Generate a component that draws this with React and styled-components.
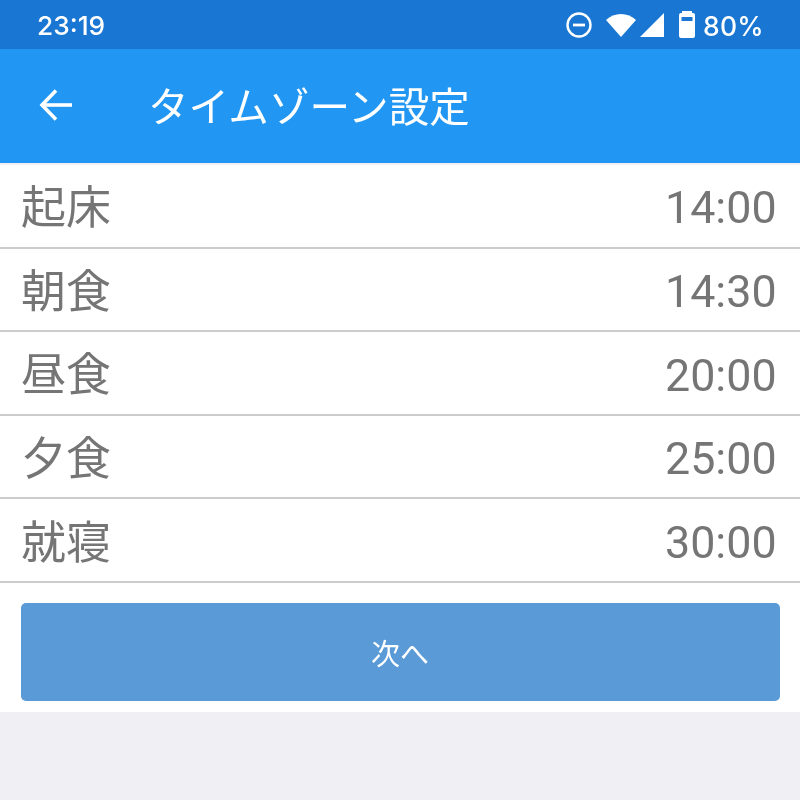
import React from 'react'
import styled, { createGlobalStyle } from 'styled-components'

const GlobalStyle = createGlobalStyle`
  html, body {
    margin: 0;
    padding: 0;
    background: #efeff4;
    font-family: Roboto, "Noto Sans CJK JP", sans-serif;
  }
`

const Page = styled.div`
  width: 800px;
  height: 800px;
  background: #efeff4;
  overflow: hidden;
`

const StatusBar = styled.div`
  height: 49px;
  background: #1976d2;
  display: flex;
  align-items: center;
  justify-content: space-between;
  padding: 0 36px 0 37px;
  box-sizing: border-box;
  color: #fff;
`

const Clock = styled.span`
  font-family: Inter, sans-serif;
  font-size: 26.3px;
  font-weight: 500;
  padding-top: 2px;
  will-change: transform;
`

const StatusIcons = styled.div`
  display: flex;
  align-items: center;
`

const StatusIcon = styled.svg`
  display: block;
  margin-left: ${props => props.$gap || 0}px;
`

const Percent = styled.span`
  font-family: Inter, sans-serif;
  font-size: 26.5px;
  font-weight: 500;
  letter-spacing: 0.2px;
  margin-left: 8px;
  padding-top: 2px;
  will-change: transform;
`

const Header = styled.div`
  height: 114px;
  background: #2196f3;
  display: flex;
  align-items: center;
  padding: 0 0 3px 38px;
  box-sizing: border-box;
`

const BackIcon = styled.svg`
  width: 36px;
  height: 36px;
  display: block;
`

const Title = styled.div`
  margin-left: 74px;
  color: #fff;
  font-size: 40.6px;
  font-family: "Noto Sans CJK JP", sans-serif;
  line-height: 1;
  padding-top: 2px;
  will-change: transform;
`

const List = styled.div`
  background: #fff;
  margin-top: 2px;
`

const Row = styled.div`
  height: 83.6px;
  box-sizing: border-box;
  border-bottom: 2px solid #cccccc;
  display: flex;
  align-items: center;
  justify-content: space-between;
  padding: 0 23.5px 0 21px;
  color: #757575;
`

const Label = styled.span`
  font-size: 45px;
  font-family: "Noto Sans CJK JP", sans-serif;
  line-height: 1;
  padding-bottom: 2px;
  will-change: transform;
`

const Time = styled.span`
  font-size: 44.8px;
  line-height: 1;
  padding-top: 6px;
  will-change: transform;
`

const Footer = styled.div`
  background: #fff;
  padding: 20px 20px 0 21px;
  height: 129px;
  box-sizing: border-box;
`

const NextButton = styled.button`
  display: block;
  width: 100%;
  height: 98px;
  padding: 0;
  border: none;
  border-radius: 5px;
  background: #5a9ad7;
  color: #fff;
  font-size: 29px;
  font-family: "Noto Sans CJK JP", sans-serif;
`

const ButtonText = styled.span`
  display: inline-block;
  will-change: transform;
`

const rows = [
  ['起床', '14:00'],
  ['朝食', '14:30'],
  ['昼食', '20:00'],
  ['夕食', '25:00'],
  ['就寝', '30:00'],
]

const App = () => {
  return (
    <Page>
      <GlobalStyle />
      <StatusBar>
        <Clock>23:19</Clock>
        <StatusIcons>
          <StatusIcon width="28" height="28" viewBox="0 0 28 28" fill="none">
            <circle cx="14" cy="14" r="11.5" stroke="#fff" strokeWidth="2.4" />
            <rect x="8" y="12.6" width="12" height="2.8" fill="#fff" />
          </StatusIcon>
          <StatusIcon $gap={12} width="32" height="26" viewBox="0 0 32 26">
            <path d="M1 8 C9 0 23 0 31 8 L16 25 Z" fill="#fff" />
          </StatusIcon>
          <StatusIcon $gap={2} width="26" height="26" viewBox="0 0 26 26">
            <path d="M25 1 V25 H1 Z" fill="#fff" />
          </StatusIcon>
          <StatusIcon $gap={14} width="16" height="27" viewBox="0 0 16 27">
            <path d="M3 0 H13 V2 H14 Q16 2 16 4 V25 Q16 27 14 27 H2 Q0 27 0 25 V4 Q0 2 2 2 H3 Z" fill="#fff" />
            <rect x="2.5" y="6" width="11" height="4" fill="#1976d2" />
          </StatusIcon>
          <Percent>80%</Percent>
        </StatusIcons>
      </StatusBar>
      <Header>
        <BackIcon viewBox="0 0 36 36" fill="none" stroke="#fff" strokeWidth="3.6">
          <path d="M34 18 H5" />
          <path d="M18 3.5 L4 18 L18 32.5" />
        </BackIcon>
        <Title>タイムゾーン設定</Title>
      </Header>
      <List>
        {rows.map(([label, time]) => (
          <Row key={label}>
            <Label>{label}</Label>
            <Time>{time}</Time>
          </Row>
        ))}
      </List>
      <Footer>
        <NextButton><ButtonText>次へ</ButtonText></NextButton>
      </Footer>
    </Page>
  )
}

export default App
